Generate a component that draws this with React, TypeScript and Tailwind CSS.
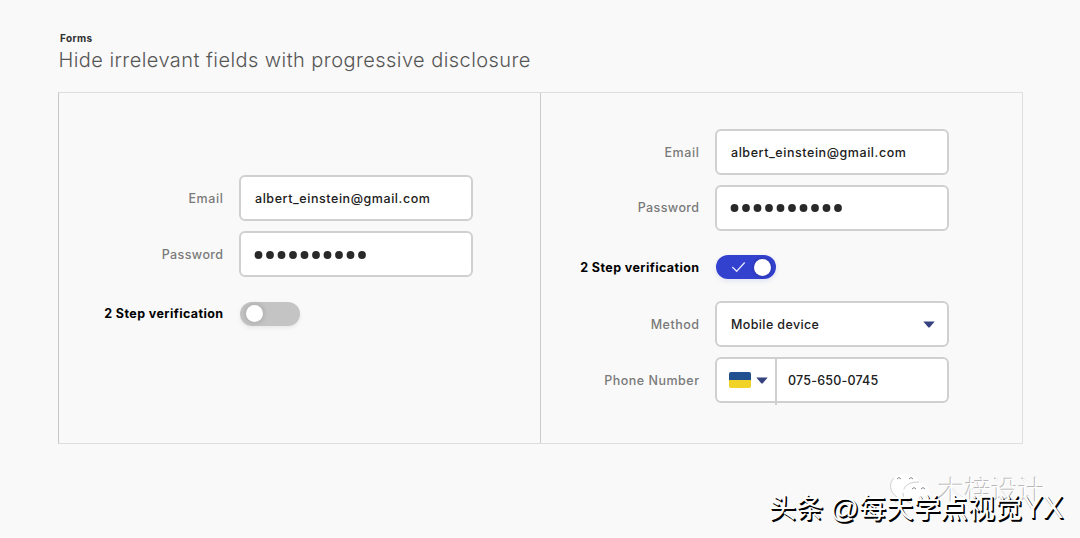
import type { ReactNode } from "react";

const fieldBox =
  "flex h-[46px] w-[234px] items-center rounded-[6px] border-2 border-[#d0d0d0] bg-white text-[12.5px] font-medium text-[#202020]";

function Row({ label, className, children }: { label: ReactNode; className: string; children: ReactNode }) {
  return (
    <div className={"flex items-center " + className}>
      <div className="mr-[15.5px] flex flex-1 justify-end whitespace-nowrap pt-[2px] text-[12.5px] font-medium text-[#7a7a7a]">{label}</div>
      <div className="w-[234px]">{children}</div>
    </div>
  );
}

function EmailField() {
  return (
    <div className={fieldBox + " pt-[2px] pl-[14px]"}>
      <span className="tracking-[0.56px]">albert_einstein@gmail.com</span>
    </div>
  );
}

function PasswordField() {
  return (
    <div className={fieldBox + " pt-px pl-[13px]"}>
      <svg viewBox="0 0 114 10" className="h-[10px] w-[114px]" fill="#292929">
        {Array.from({ length: 10 }, (_, i) => (
          <circle key={i} cx={4.5 + i * 11.5} cy={5} r={3.9} />
        ))}
      </svg>
    </div>
  );
}

function Caret({ className }: { className: string }) {
  return (
    <svg viewBox="0 0 12 7" className={"h-[7px] w-[12px] " + className}>
      <path d="M0.3 0.4H11.7L7 6Q6 7 5 6Z" fill="#34427f" />
    </svg>
  );
}

function ToggleOff() {
  return (
    <div className="ml-px flex h-6 w-[60px] items-center rounded-full bg-[#c4c4c4] pl-[6px] shadow-[0_2px_4px_rgba(0,0,0,0.07)]">
      <span className="size-[17px] rounded-full bg-white shadow-[0_0_4px_2px_rgba(0,0,0,0.1)]" />
    </div>
  );
}

function ToggleOn() {
  return (
    <div className="ml-px flex h-6 w-[60px] items-center rounded-full bg-[#3341cf] pl-[15px] shadow-[0_2px_5px_rgba(50,65,200,0.12)]">
      <svg viewBox="0 0 15 12" className="h-3 w-[15px]" fill="none" stroke="#e2e5ff" strokeWidth="1.3">
        <path d="M1.3 6L5.7 10.2L13.7 1.5" />
      </svg>
      <span className="ml-[8px] size-[17px] rounded-full bg-white shadow-[0_0_3px_1px_rgba(20,30,90,0.3)]" />
    </div>
  );
}

const email = <span className="tracking-[0.6px]">Email</span>;
const password = <span className="tracking-[0.4px]">Password</span>;
const verification = <span className="font-bold tracking-[0.4px] text-black">2 Step verification</span>;

function Watermark() {
  return (
    <div className="pointer-events-none absolute inset-0">
      <svg viewBox="0 0 46 38" className="absolute top-[470px] left-[888px] h-[38px] w-[46px]" fill="#fff" stroke="#c4c4c4" strokeWidth="0.8">
        <path d="M18 3C8 3 2 9 2 16C2 21 5 25 9 27L7 32L13 29C23 31 33 24 33 15C32 8 26 3 18 3Z" stroke="#f5f5f5" />
        <path d="M6 8C1 13 1 22 9 27L7 32L13 29" fill="none" />
        <path d="M29 12C20 12 15 17 15 23C15 30 22 35 31 33L36 36L35 32C40 29 43 26 42 21C40 15 36 12 29 12Z" stroke="#f5f5f5" />
        <path d="M16 19C18 14 23 12 31 12M15 23C15 28 18 32 23 33" fill="none" />
        <path d="M9 9Q11 6 13 9M21 9Q23 6 25 9M24 19Q26 16 28 19M33 19Q35 16 37 19" fill="none" stroke="#888" strokeWidth="1" />
      </svg>
      <div className="absolute top-[471px] left-[938px] whitespace-nowrap font-['Noto_Sans_CJK_SC',sans-serif] text-[26.7px] leading-[36px] font-light text-white [text-shadow:-1px_-1px_0_#b8b8b8]">
        木梓设计
      </div>
      <div className="absolute top-[487px] left-[769px] flex items-baseline whitespace-nowrap font-['Noto_Sans_CJK_SC',sans-serif] text-[27.2px] leading-[38px] text-white [text-shadow:1px_1px_0_#000,1.5px_2px_0_#000]">
        <span className="w-[61px]">头条</span>
        <span className="w-[29px] font-['Liberation_Sans',sans-serif] text-[28.5px]">@</span>
        <span>每天学点视觉</span>
        <span className="font-['Liberation_Sans',sans-serif] text-[31px]">YX</span>
      </div>
    </div>
  );
}

export default function App() {
  return (
    <main className="relative h-[538px] w-[1080px] overflow-hidden bg-[#f9f9f9] pt-[31px] pl-[58px] font-['Inter',sans-serif]">
      <header>
        <div className="ml-[2px] h-[14px] text-[10px] leading-[14px] font-bold text-[#303030]">
          <span className="tracking-[0.35px]">Forms</span>
        </div>
        <h1 className="h-[28px] whitespace-nowrap pt-px text-[20px] leading-[28px] font-light text-[#565656]">
          <span className="ml-[0.5px] tracking-[0.44px]">Hide irrelevant fields with progressive disclosure</span>
        </h1>
      </header>
      <section className="mt-[19px] flex h-[352px] w-[965px] border border-[#dedede] border-l-[#c8c8c8]">
        <div className="w-[482px] border-r border-[#cbcbcb] pt-[82px] pr-[67px]">
          <Row label={email} className="h-[46px]"><EmailField /></Row>
          <Row label={password} className="mt-[10px] h-[46px]"><PasswordField /></Row>
          <Row label={verification} className="mt-[24.5px] h-6"><ToggleOff /></Row>
        </div>
        <div className="flex-1 pt-[36px] pr-[73px]">
          <Row label={email} className="h-[46px]"><EmailField /></Row>
          <Row label={password} className="mt-[9.5px] h-[46px]"><PasswordField /></Row>
          <Row label={verification} className="mt-[24.5px] h-6"><ToggleOn /></Row>
          <Row label={<span className="tracking-[0.5px]">Method</span>} className="mt-[22px] h-[46px]">
            <div className={fieldBox + " justify-between pr-[12px] pl-[14px]"}>
              <span className="pt-[2px] tracking-[0.38px]">Mobile device</span>
              <Caret className="" />
            </div>
          </Row>
          <Row label={<span className="tracking-[0.5px]">Phone Number</span>} className="mt-[10px] h-[46px]">
            <div className={fieldBox}>
              <div className="-mb-[3px] flex h-[47px] w-[60px] items-center border-r-2 border-[#d0d0d0] pb-[3px] pl-[12px]">
                <div className="flex h-[16px] w-[22px] flex-col overflow-hidden rounded-[2px]">
                  <div className="h-2 bg-[#205090]" />
                  <div className="h-2 bg-[#f0d326]" />
                </div>
                <Caret className="ml-[5px]" />
              </div>
              <span className="ml-[11px] pt-[2px] tracking-[0.2px]">075-650-0745</span>
            </div>
          </Row>
        </div>
      </section>
      <Watermark />
    </main>
  );
}
